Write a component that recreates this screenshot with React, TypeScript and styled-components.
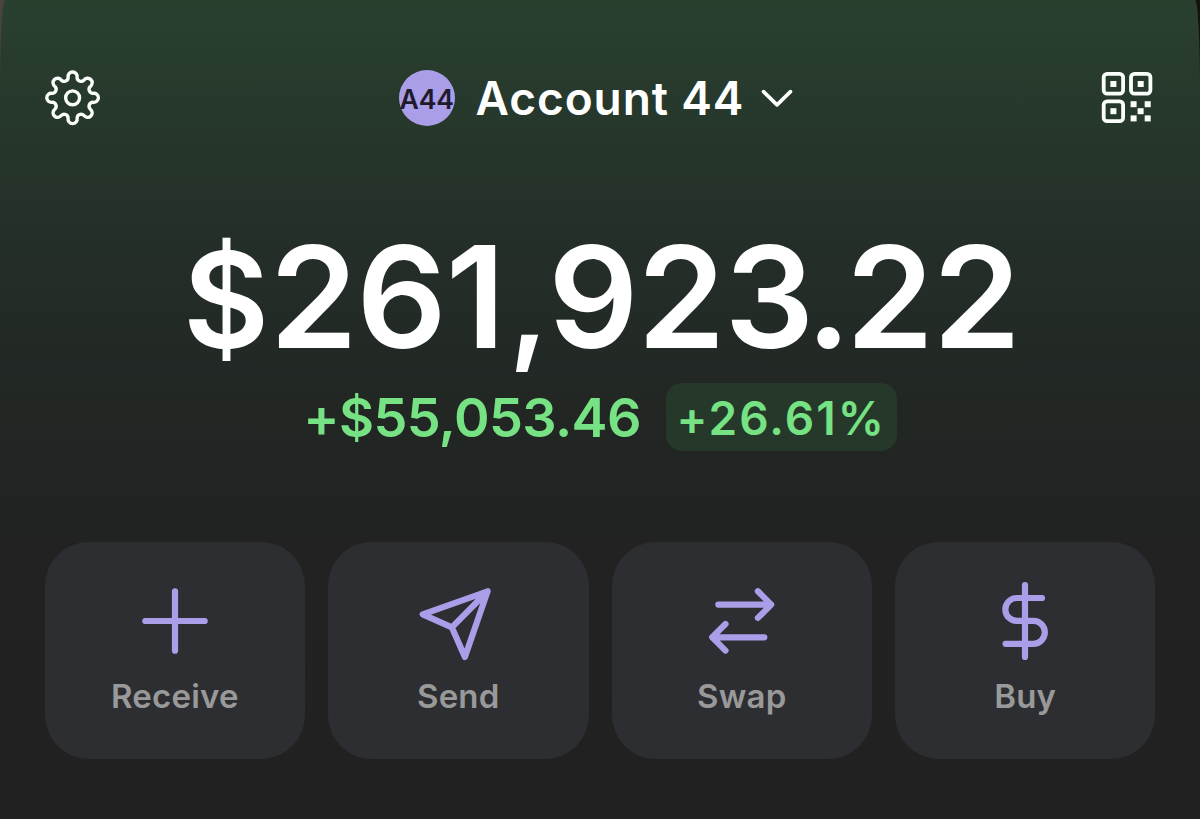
import React from 'react';
import styled, { createGlobalStyle } from 'styled-components';


const GEAR_LOBES = 8;

// outline of the cog: eight round lobes joined by round valleys
const gearPath = () => {
  const lobeDist = 20.7;
  const lobeR = 4.6;
  const valleyDist = 22.1;
  const valleyR = 4;
  const point = (dist: number, deg: number) => {
    const rad = (deg * Math.PI) / 180;
    return [28 + dist * Math.sin(rad), 28 - dist * Math.cos(rad)];
  };
  const step = 360 / GEAR_LOBES;
  let d = '';
  for (let i = 0; i < GEAR_LOBES; i++) {
    const lobe = point(lobeDist, i * step);
    const ratio = lobeR / (lobeR + valleyR);
    const [start, end] = [-step / 2, step / 2].map((offset) => {
      const valley = point(valleyDist, i * step + offset);
      return lobe.map((v, k) => (v + (valley[k] - v) * ratio).toFixed(2)).join(' ');
    });
    d += i === 0 ? `M${start}` : `A${valleyR} ${valleyR} 0 0 0 ${start}`;
    d += `A${lobeR} ${lobeR} 0 1 1 ${end}`;
    if (i === GEAR_LOBES - 1) {
      d += `A${valleyR} ${valleyR} 0 0 0 ${d.slice(1, d.indexOf('A'))}Z`;
    }
  }
  return d;
};

const GearIcon = () => (
  <svg width="56" height="56" viewBox="0.2 0 56.4 56.4" fill="none" stroke="#fbfffc" strokeWidth="3.4">
    <path d={gearPath()} />
    <circle cx="28" cy="28" r="7" />
  </svg>
);

const QrIcon = () => (
  <svg width="54" height="52" viewBox="0 0 54 52" fill="#fbfffc">
    <g fill="none" stroke="#fbfffc" strokeWidth="3.8">
      <rect x="2.7" y="1.9" width="19.4" height="19.8" rx="3.4" />
      <rect x="30" y="1.9" width="19.4" height="19.8" rx="3.4" />
      <rect x="2.7" y="29.3" width="19.4" height="19.8" rx="3.4" />
    </g>
    <rect x="9.4" y="9" width="6" height="6" />
    <rect x="36.7" y="9" width="6" height="6" />
    <rect x="9.4" y="36.2" width="6" height="6" />
    <rect x="29.6" y="29.2" width="6" height="6" />
    <rect x="43.7" y="29.2" width="6" height="6" />
    <rect x="36.6" y="36.2" width="6" height="6" />
    <rect x="29.6" y="43.4" width="6" height="6" />
    <rect x="43.7" y="43.4" width="6" height="6" />
  </svg>
);

const actions = [
  { label: 'Receive', path: 'M40 10.3V69.7M10.3 40H69.7' },
  { label: 'Send', path: 'M69.6 10.3L4.7 33.3L33.9 46.4L46.9 76L69.6 10.3L33.9 46.4' },
  { label: 'Swap', path: 'M16.3 23.6H69.1M55.9 10.3L69.2 23.6L55.9 36.9M62.3 56.3H10.3M23.5 43L10.2 56.3L23.5 69.6' },
  { label: 'Buy', path: 'M40 4V76M57 17H31.8a11.4 11.4 0 0 0 0 22.9H48.4a11.4 11.4 0 0 1 0 22.9H20.6' },
];


const App = () => {

  return (
    <StyledBackdrop>
      <GlobalStyle />
      <StyledWallet>

        <StyledHeader>
          <GearIcon />
          <StyledAccount>
            <StyledAvatar>A44</StyledAvatar>
            <StyledName>Account 44</StyledName>
            <StyledChevron viewBox="0 0 32 20">
              <path d="M2.5 3.6L16 16.9L29.5 3.6" />
            </StyledChevron>
          </StyledAccount>
          <QrIcon />
        </StyledHeader>

        <StyledBalance>
          <StyledCurrency>$</StyledCurrency>261<StyledComma>,</StyledComma>92<StyledPoint>3.</StyledPoint>22
        </StyledBalance>

        <StyledChange>
          <StyledAmount>+$55,053.46</StyledAmount>
          <StyledPercent>+26.61%</StyledPercent>
        </StyledChange>

        <StyledActions>
          {actions.map(({ label, path }) => (
            <StyledAction key={label}>
              <StyledActionIcon viewBox="0 0 80 80">
                <path d={path} />
              </StyledActionIcon>
              <StyledLabel>{label}</StyledLabel>
            </StyledAction>
          ))}
        </StyledActions>

      </StyledWallet>
    </StyledBackdrop>
  )
}

export default App;

const GlobalStyle = createGlobalStyle`
  body {
    margin: 0;
    font-family: Inter, "Liberation Sans", sans-serif;
    font-weight: 600;
  }
`;

const StyledBackdrop = styled.div`
  height: 819px;
  overflow: hidden;
  background: linear-gradient(90deg, #4a433e 50%, #15120c 50%);
`;

const StyledWallet = styled.main`
  box-sizing: border-box;
  height: 819px;
  padding: 69px 44.6px 60px;
  display: flex;
  flex-direction: column;
  border-radius: 5px 5px 0 0 / 90px 90px 0 0;
  background: linear-gradient(180deg, #29402f 0, #26362b 140px, #242e28 250px, #222724 400px, #212221 560px, #212121 819px);
`;

const StyledHeader = styled.header`
  height: 57px;
  display: flex;
  align-items: center;
  justify-content: space-between;
`;

const StyledAccount = styled.div`
  margin-right: 10px;
  display: flex;
  align-items: center;
`;

const StyledAvatar = styled.div`
  box-sizing: border-box;
  width: 56px;
  height: 56px;
  padding-top: 2px;
  display: flex;
  align-items: center;
  justify-content: center;
  border-radius: 50%;
  background: #aa9ee9;
  color: #1f1b2c;
  font-size: 26.6px;
  letter-spacing: -0.2px;
  white-space: nowrap;
`;

const StyledName = styled.span`
  margin-left: 21px;
  color: #ffffff;
  font-size: 46px;
  line-height: 58px;
  letter-spacing: 0.9px;
`;

const StyledChevron = styled.svg`
  width: 32px;
  height: 20px;
  margin-left: 17px;
  fill: none;
  stroke: #ffffff;
  stroke-width: 3.6;
  stroke-linecap: round;
  stroke-linejoin: round;
`;

const StyledBalance = styled.h1`
  height: 171px;
  margin: 86px 0 0;
  padding-left: 3px;
  color: #ffffff;
  font-size: 141px;
  font-weight: 570;
  line-height: 169px;
  letter-spacing: -0.9px;
  text-align: center;
  white-space: nowrap;
`;

const StyledCurrency = styled.span`
  font-size: 0.94em;
  line-height: 1;
  letter-spacing: 0.4px;
`;

const StyledComma = styled.span`
  margin-left: 4px;
  font-size: 0.9em;
  line-height: 1;
`;

const StyledPoint = styled.span`
  letter-spacing: -5px;
`;

const StyledChange = styled.div`
  height: 68px;
  display: flex;
  align-items: center;
  justify-content: center;
  gap: 25px;
  color: #76e283;
`;

const StyledAmount = styled.span`
  font-size: 54px;
  letter-spacing: -0.6px;
`;

const StyledPercent = styled.span`
  box-sizing: border-box;
  width: 231px;
  height: 68px;
  border-radius: 16px;
  background: #25382a;
  font-size: 46px;
  line-height: 70px;
  letter-spacing: 2.1px;
  text-align: center;
`;

const StyledActions = styled.nav`
  margin-top: auto;
  display: grid;
  grid-template-columns: repeat(4, 1fr);
  gap: 23px;
`;

const StyledAction = styled.div`
  box-sizing: border-box;
  height: 217px;
  padding-top: 39px;
  display: flex;
  flex-direction: column;
  align-items: center;
  border-radius: 44px;
  background: #2d2e32;
`;

const StyledActionIcon = styled.svg`
  width: 80px;
  height: 80px;
  fill: none;
  stroke: #aa9ee9;
  stroke-width: 6.2;
  stroke-linecap: round;
  stroke-linejoin: round;
`;

const StyledLabel = styled.span`
  margin-top: 15px;
  color: #99999a;
  font-size: 33px;
  line-height: 40px;
  letter-spacing: 0.2px;
`;
